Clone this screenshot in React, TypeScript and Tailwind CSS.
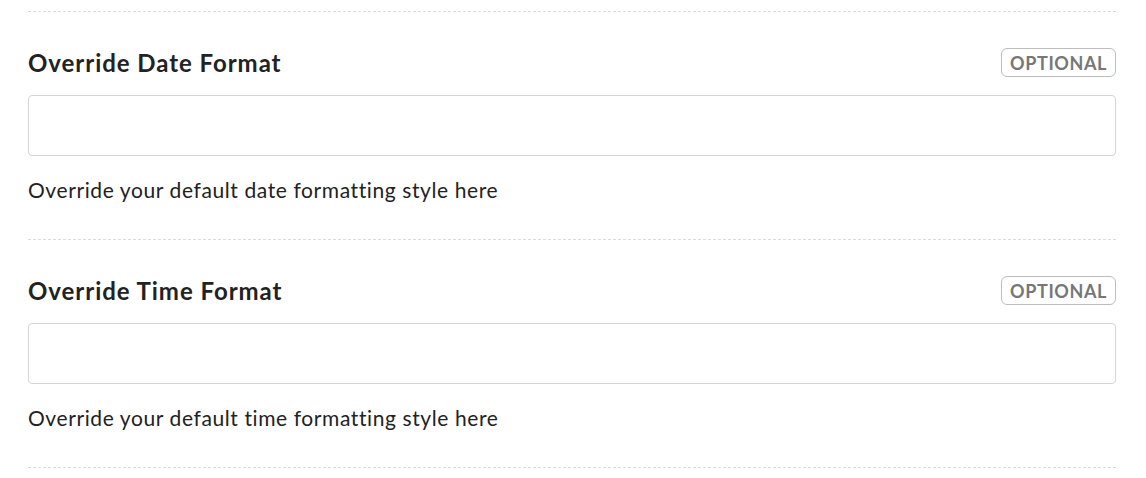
const sections = [
  {
    id: "date",
    label: "Override Date Format",
    help: "Override your default date formatting style here",
  },
  {
    id: "time",
    label: "Override Time Format",
    help: "Override your default time formatting style here",
  },
];

function OptionalBadge() {
  return (
    <span className="inline-flex items-center h-[29px] px-[8px] rounded-[6px] border border-[#bdbdbd] text-[18px] font-bold text-[#777] tracking-[0.6px] leading-none">
      OPTIONAL
    </span>
  );
}

export default function App() {
  return (
    <div
      className="min-h-screen bg-white pl-[28px] pr-[30px] pt-[11px] text-[#222]"
      style={{ fontFamily: "Lato, 'Open Sans', sans-serif" }}
    >
      {sections.map((s) => (
        <div key={s.id} className="border-t border-dashed border-[#dcdcdc] pt-[36px] pb-[35px]">
          <div className="flex items-center justify-between h-[29px]">
            <label htmlFor={s.id} className="text-[24px] font-bold text-[#222] tracking-[0.95px]">
              {s.label}
            </label>
            <OptionalBadge />
          </div>
          <input
            id={s.id}
            type="text"
            className="mt-[18px] block w-full h-[61px] rounded-[4px] border border-[#d6d6d6] bg-white px-3 text-[20px] outline-none"
          />
          <p className="mt-[20px] text-[21px] leading-[28px] text-[#222] tracking-[0.6px]">{s.help}</p>
        </div>
      ))}
      <div className="border-t border-dashed border-[#dcdcdc]" />
    </div>
  );
}
